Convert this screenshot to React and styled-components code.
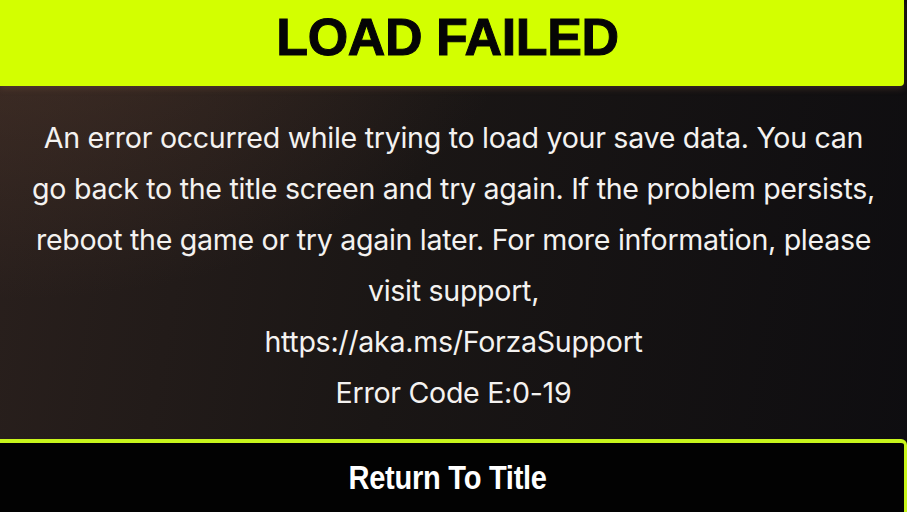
import React from "react";
import styled, { createGlobalStyle } from "styled-components";

const Global = createGlobalStyle`
  html, body { margin: 0; padding: 0; background: #0b0a0b; }
  #root { width: 907px; height: 512px; }
`;

const Screen = styled.div`
  width: 907px;
  height: 512px;
  display: flex;
  flex-direction: column;
  overflow: hidden;
  background:
    radial-gradient(ellipse 520px 300px at 0% 0%, rgba(90, 62, 48, 0.5), rgba(90, 62, 48, 0) 100%),
    linear-gradient(100deg, #2a201d 0%, #1a1615 45%, #0e0d10 100%);
  font-family: "Liberation Sans", Arial, sans-serif;
`;

const Header = styled.header`
  height: 86px;
  margin-right: 3px;
  background: #d3ff00;
  border-bottom-right-radius: 4px;
  display: flex;
  align-items: center;
  justify-content: center;
  padding-bottom: 13px;
  box-sizing: border-box;
  box-shadow: 0 3px 6px rgba(120, 80, 60, 0.35);
`;

const Title = styled.h1`
  margin: 0 9px 0 0;
  font-family: "Liberation Sans", Arial, sans-serif;
  font-weight: 700;
  font-size: 52px;
  letter-spacing: -0.4px;
  color: #050505;
  line-height: 1;
  -webkit-text-stroke: 1px #050505;
`;

const Body = styled.main`
  flex: 1;
  display: flex;
  flex-direction: column;
  align-items: center;
  padding-top: 26px;
`;

const Line = styled.p`
  margin: 0;
  height: 51px;
  line-height: 51px;
  font-family: Inter, "Liberation Sans", Arial, sans-serif;
  font-size: 28.6px;
  font-weight: 400;
  color: #f4f2f0;
  white-space: nowrap;
  letter-spacing: -0.3px;
`;

const Button = styled.button`
  height: 73px;
  box-sizing: border-box;
  border: none;
  border-top: 4px solid #c8f51c;
  border-right: 3px solid #c8f51c;
  border-top-right-radius: 6px;
  background: #020202;
  display: flex;
  align-items: center;
  justify-content: center;
  padding: 0 8px 0 0;
  cursor: pointer;
`;

const ButtonLabel = styled.span`
  display: inline-block;
  font-family: "Liberation Sans", Arial, sans-serif;
  font-weight: 700;
  font-size: 33px;
  color: #ffffff;
  transform: scaleX(0.88);
  letter-spacing: -0.3px;
  margin-top: 1px;
`;

const lines = [
  "An error occurred while trying to load your save data. You can",
  "go back to the title screen and try again. If the problem persists,",
  "reboot the game or try again later. For more information, please",
  "visit support,",
  "https://aka.ms/ForzaSupport",
  "Error Code E:0-19",
];

export default function App() {
  return (
    <>
      <Global />
      <Screen>
        <Header>
          <Title>LOAD FAILED</Title>
        </Header>
        <Body>
          {lines.map((l) => (
            <Line key={l}>{l}</Line>
          ))}
        </Body>
        <Button>
          <ButtonLabel>Return To Title</ButtonLabel>
        </Button>
      </Screen>
    </>
  );
}
